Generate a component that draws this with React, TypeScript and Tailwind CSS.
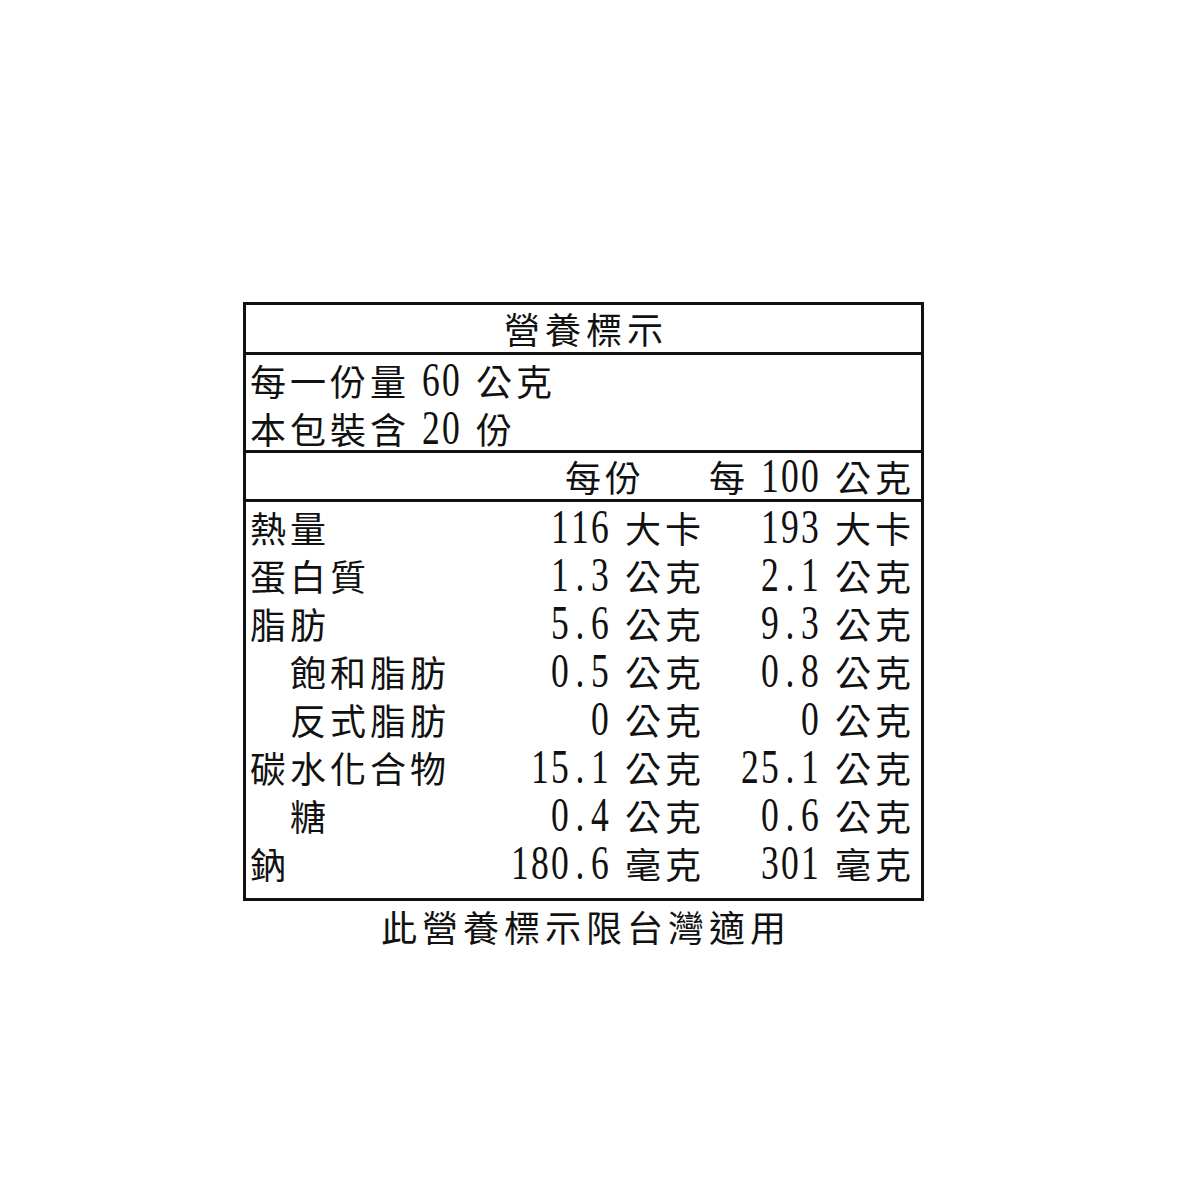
import React from 'react';

type Row = {
  label: string;
  indent?: boolean;
  serving: string;
  per100: string;
};

const rows: Row[] = [
  { label: '熱量', serving: '116 大卡', per100: '193 大卡' },
  { label: '蛋白質', serving: '1.3 公克', per100: '2.1 公克' },
  { label: '脂肪', serving: '5.6 公克', per100: '9.3 公克' },
  { label: '飽和脂肪', indent: true, serving: '0.5 公克', per100: '0.8 公克' },
  { label: '反式脂肪', indent: true, serving: '0 公克', per100: '0 公克' },
  { label: '碳水化合物', serving: '15.1 公克', per100: '25.1 公克' },
  { label: '糖', indent: true, serving: '0.4 公克', per100: '0.6 公克' },
  { label: '鈉', serving: '180.6 毫克', per100: '301 毫克' },
];

// Every glyph sits in a fixed cell, the way the printed label is set:
// full-width characters 40px, digits and the point 20px.
const Line = ({ text, wide = false }: { text: string; wide?: boolean }) => (
  <div className="flex">
    {Array.from(text).map((c, i) => {
      if (c === ' ') return <span key={i} className="w-[13px]" />;
      if (/[0-9.]/.test(c)) {
        return (
          <span key={i} className="flex w-[20px] justify-center font-['Liberation_Serif',serif] text-[48px]">
            <span className="inline-block scale-x-[0.74]">{c}</span>
          </span>
        );
      }
      return (
        <span
          key={i}
          className={
            wide
              ? "w-[41px] text-center font-['Noto_Sans_CJK_TC',sans-serif] text-[36px]"
              : "w-[40px] text-center font-['Noto_Sans_CJK_TC',sans-serif] text-[36px]"
          }
        >
          {c}
        </span>
      );
    })}
  </div>
);

export default function App() {
  return (
    <div className="w-[1200px] h-[1200px] bg-white pt-[302px] pl-[243px] text-[#111]">
      <div className="w-[681px]">
        <div className="border-[3px] border-[#111]">
          {/* title */}
          <div className="h-[50px] border-b-[3px] border-[#111] flex justify-center leading-[47px]">
            <Line text="營養標示" wide />
          </div>

          {/* serving info */}
          <div className="h-[98px] border-b-[3px] border-[#111] pt-[1px] pl-[2px] leading-[48px]">
            <Line text="每一份量 60 公克" />
            <Line text="本包裝含 20 份" />
          </div>

          {/* column headers */}
          <div className="h-[49px] border-b-[3px] border-[#111] flex pr-[8px] leading-[46px]">
            <div className="flex-1" />
            <div className="w-[250px] flex justify-end pr-[60px]">
              <Line text="每份" />
            </div>
            <div className="w-[210px] flex justify-end">
              <Line text="每 100 公克" />
            </div>
          </div>

          {/* nutrients */}
          <div className="h-[396px] pt-[1px] leading-[48px]">
            {rows.map((r) => (
              <div key={r.label} className="flex h-[48px] pr-[8px]">
                <div className={r.indent ? 'flex-1 flex pl-[42px]' : 'flex-1 flex pl-[2px]'}>
                  <Line text={r.label} />
                </div>
                <div className="w-[250px] flex justify-end">
                  <Line text={r.serving} />
                </div>
                <div className="w-[210px] flex justify-end">
                  <Line text={r.per100} />
                </div>
              </div>
            ))}
          </div>
        </div>

        <div className="mt-[1px] flex justify-center leading-[48px]">
          <Line text="此營養標示限台灣適用" wide />
        </div>
      </div>
    </div>
  );
}
